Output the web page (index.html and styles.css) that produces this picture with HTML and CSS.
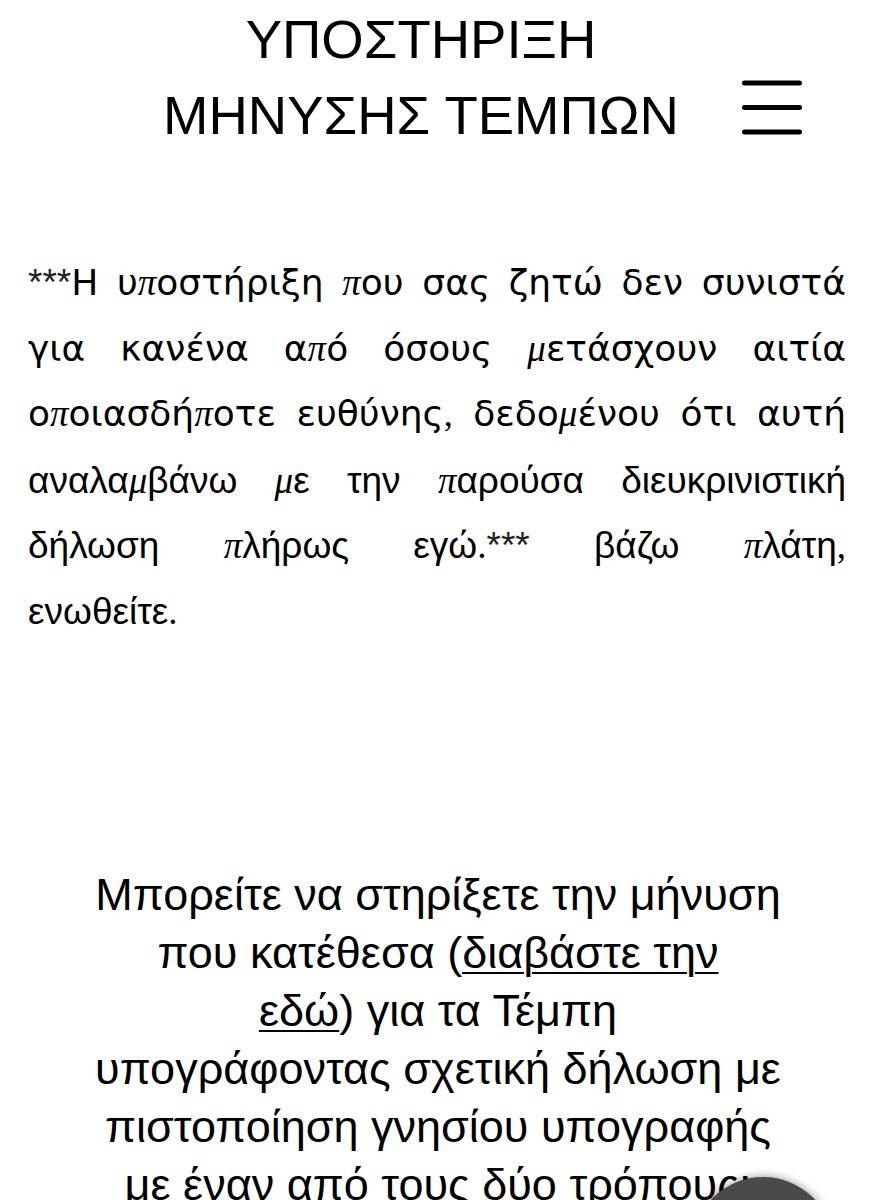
FILE: index.html
```html
<!DOCTYPE html>
<html lang="el">
<head>
<meta charset="utf-8">
<title>ΥΠΟΣΤΗΡΙΞΗ ΜΗΝΥΣΗΣ ΤΕΜΠΩΝ</title>
<link rel="stylesheet" href="styles.css">
</head>
<body>
<header class="site-header">
  <h1 class="site-title">ΥΠΟΣΤΗΡΙΞΗ<br>ΜΗΝΥΣΗΣ ΤΕΜΠΩΝ</h1>
  <button class="menu-btn" aria-label="Μενού">
    <svg width="62" height="55" viewBox="0 0 62 55" aria-hidden="true">
      <line x1="3.5" y1="3" x2="58.5" y2="3"/>
      <line x1="3.5" y1="27.5" x2="58.5" y2="27.5"/>
      <line x1="3.5" y1="52" x2="58.5" y2="52"/>
    </svg>
  </button>
</header>

<main class="content">
  <p class="disclaimer">
    <span class="jl wide"><span class="ast">***</span>Η υ<i class="m">π</i>οστήριξη <i class="m">π</i>ου σας ζητώ δεν συνιστά</span>
    <span class="jl wide">για κανένα α<i class="m">π</i>ό όσους <i class="m">μ</i>ετάσχουν αιτία</span>
    <span class="jl wide">ο<i class="m">π</i>οιασδή<i class="m">π</i>οτε ευθύνης<span class="pn">,</span> δεδο<i class="m">μ</i>ένου ότι αυτή</span>
    <span class="jl">αναλα<i class="m">μ</i>βάνω <i class="m">μ</i>ε την <i class="m">π</i>αρούσα διευκρινιστική</span>
    <span class="jl">δήλωση <i class="m">π</i>λήρως εγώ<span class="pn">.</span><span class="ast">***</span> βάζω <i class="m">π</i>λάτη<span class="pn">,</span></span>
    <span class="ll">ενωθείτε<span class="pn">.</span></span>
  </p>

  <p class="support">
    Μπορείτε να στηρίξετε την μήνυση<br>
    που κατέθεσα (<a href="#">διαβάστε την<br>εδώ</a>) για τα Τέμπη<br>
    υπογράφοντας σχετική δήλωση με<br>
    πιστοποίηση γνησίου υπογραφής<br>
    με έναν από τους δύο τρόπους:
  </p>
</main>

<button class="fab" aria-label="Επικοινωνία"></button>
</body>
</html>
```

FILE: styles.css
```css
html, body {
  margin: 0;
  padding: 0;
  background: #ffffff;
}

body {
  font-family: "Liberation Sans", Arial, sans-serif;
  color: #000000;
}

.site-header {
  display: flex;
  align-items: flex-start;
  gap: 39px;
  padding: 2px 73px 0 140px;
}

.site-title {
  flex: 1;
  margin: 0;
  font-size: 54.5px;
  line-height: 76px;
  font-weight: 400;
  text-align: center;
  letter-spacing: 0;
}

.menu-btn {
  margin: 78px 0 0 0;
  padding: 0;
  border: 0;
  background: none;
  width: 62px;
  height: 55px;
  display: block;
}

.menu-btn svg {
  display: block;
}

.menu-btn line {
  stroke: #000000;
  stroke-width: 5;
  stroke-linecap: round;
}

.content {
  padding: 0 30px 0 28px;
}

.disclaimer {
  margin: 96px 0 0 0;
  font-size: 37px;
  line-height: 65.5px;
}

.jl {
  display: block;
  text-align: justify;
  text-align-last: justify;
}

.wide {
  font-family: "DejaVu Sans", "Liberation Sans", sans-serif;
  font-size: 36px;
}

.ll {
  display: block;
  text-align: left;
}

.m {
  font-family: "Liberation Serif", "Times New Roman", serif;
  font-style: italic;
  font-size: 37px;
}

.pn {
  font-family: "Liberation Serif", "Times New Roman", serif;
}

.ast {
  font-family: "Liberation Sans", Arial, sans-serif;
  font-size: 37px;
  color: #222222;
}

.support {
  margin: 222px 0 0 0;
  font-size: 45px;
  line-height: 58px;
  text-align: center;
  padding-left: 2px;
}

.support a {
  color: #000000;
  text-decoration: underline;
  text-underline-offset: 4px;
  text-decoration-thickness: 2px;
}

.fab {
  position: fixed;
  left: 692px;
  top: 1177px;
  width: 142px;
  height: 142px;
  border-radius: 50%;
  border: 0;
  padding: 0;
  background: #4a4a4a;
  box-shadow: 0 0 10px rgba(0, 0, 0, 0.45);
}
```
